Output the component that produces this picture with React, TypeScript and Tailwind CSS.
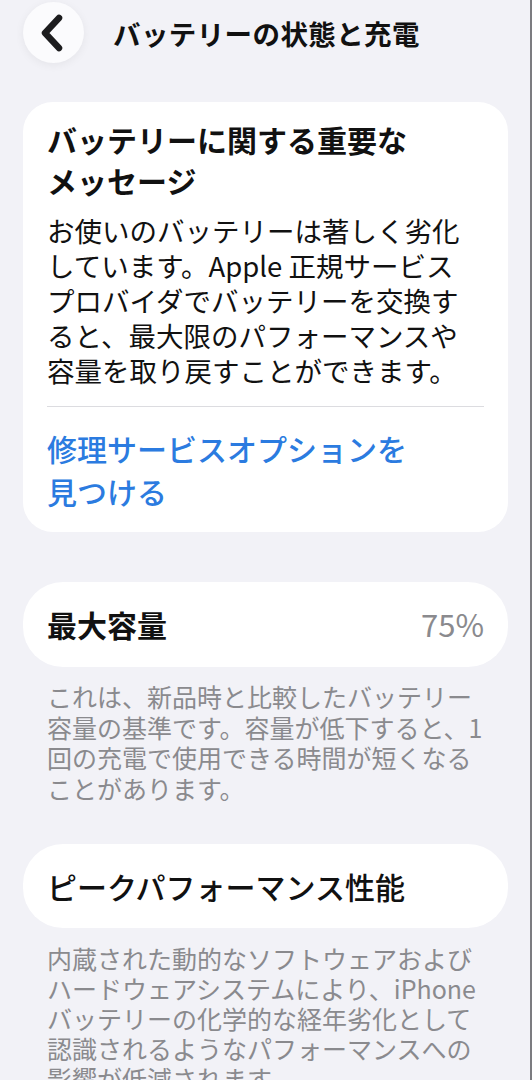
import React from "react";

const font = { fontFamily: '"Noto Sans CJK JP", "Noto Sans", sans-serif' };

function BackButton() {
  return (
    <button className="w-[61px] h-[61px] rounded-full bg-[#fbfbfd] shadow-[0_2px_10px_rgba(0,0,0,0.06)] flex items-center justify-center shrink-0">
      <svg width="30" height="40" viewBox="0 0 30 40" fill="none">
        <path d="M20 5 L6 20 L20 35" stroke="#1c1c1e" strokeWidth="6.5" strokeLinecap="round" strokeLinejoin="round" />
      </svg>
    </button>
  );
}

export default function App() {
  return (
    <div className="w-[532px] h-[1080px] overflow-hidden bg-[#f2f2f7] border-r-2 border-[#7c7c80]" style={font}>
      {/* ヘッダー */}
      <div className="flex items-center pt-[2px] pl-[23px]">
        <BackButton />
        <h1 className="ml-[29px] text-[27.5px] leading-[36px] font-bold text-[#111] tracking-[0.4px]">
          バッテリーの状態と充電
        </h1>
      </div>

      {/* 重要なメッセージ */}
      <div className="mt-[39px] ml-[23px] mr-[22px] bg-white rounded-[30px] pt-[17px] pb-[19px] px-[24px]">
        <h2 className="text-[30px] leading-[41px] font-bold text-[#111] whitespace-nowrap">
          バッテリーに関する重要な
          <br />
          メッセージ
        </h2>
        <p className="mt-[12px] text-[27.5px] leading-[35px] text-[#111] whitespace-nowrap">
          お使いのバッテリーは著しく劣化
          <br />
          しています。Apple 正規サービス
          <br />
          プロバイダでバッテリーを交換す
          <br />
          ると、最大限のパフォーマンスや
          <br />
          容量を取り戻すことができます。
        </p>
        <div className="mt-[18px] h-px bg-[#dcdce0]" />
        <a className="block mt-[20px] text-[30px] leading-[43px] text-[#2b7be0] font-medium whitespace-nowrap">
          修理サービスオプションを
          <br />
          見つける
        </a>
      </div>

      {/* 最大容量 */}
      <div className="mt-[50px] ml-[23px] mr-[22px] h-[85px] bg-white rounded-[40px] px-[24px] flex items-center justify-between">
        <span className="text-[30px] font-bold text-[#111]">最大容量</span>
        <span className="text-[31px] text-[#8a8a8e]">75%</span>
      </div>
      <p className="mt-[14px] px-[47px] text-[25px] leading-[30.5px] text-[#8a8a8e] whitespace-nowrap">
        これは、新品時と比較したバッテリー
        <br />
        容量の基準です。容量が低下すると、1
        <br />
        回の充電で使用できる時間が短くなる
        <br />
        ことがあります。
      </p>

      {/* ピークパフォーマンス性能 */}
      <div className="mt-[41px] ml-[23px] mr-[22px] h-[84px] bg-white rounded-[40px] px-[24px] flex items-center">
        <span className="text-[30px] font-medium text-[#111]">ピークパフォーマンス性能</span>
      </div>
      <p className="mt-[15px] px-[47px] text-[25px] leading-[30px] text-[#8a8a8e] whitespace-nowrap">
        内蔵された動的なソフトウェアおよび
        <br />
        ハードウェアシステムにより、iPhone
        <br />
        バッテリーの化学的な経年劣化として
        <br />
        認識されるようなパフォーマンスへの
        <br />
        影響が低減されます。
      </p>
    </div>
  );
}
